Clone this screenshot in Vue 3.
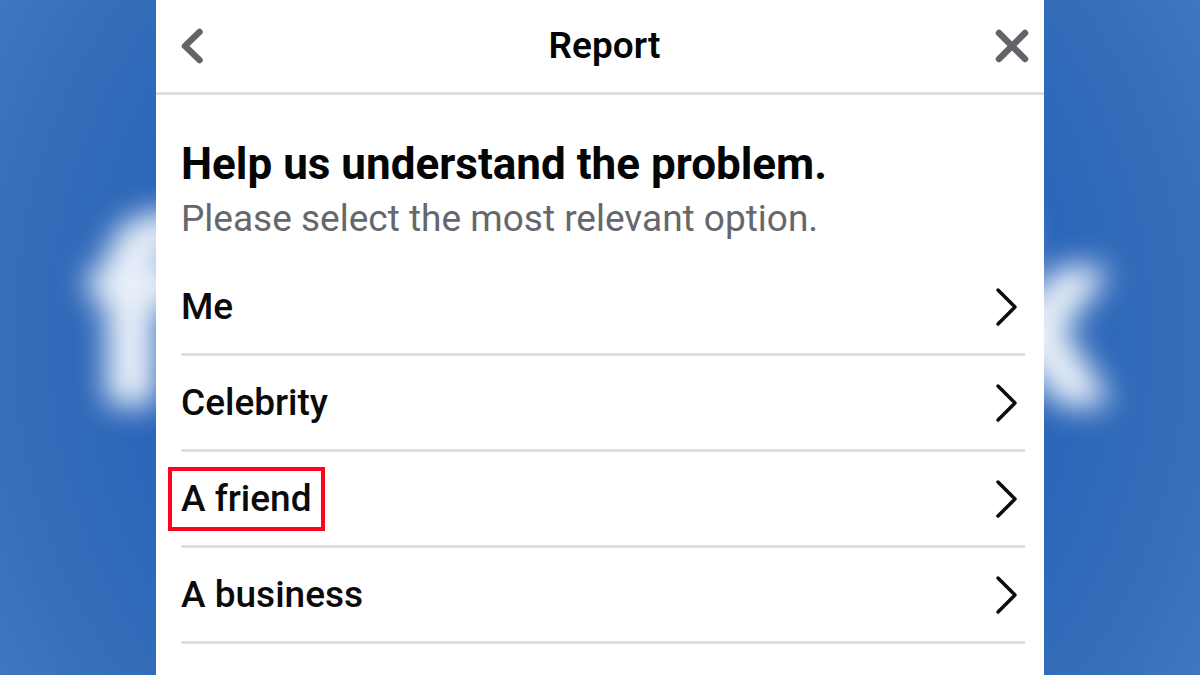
<script setup>
import { ref } from "vue";

const options = ["Me", "Celebrity", "A friend", "A business"];
const selected = ref("A friend");
</script>

<template>
  <div class="page">
    <svg
      class="backdrop"
      viewBox="0 0 1200 675"
      preserveAspectRatio="xMidYMid slice"
      aria-hidden="true"
    >
      <g class="wordmark">
        <text x="92" y="398">f</text>
        <text x="968" y="398">k</text>
      </g>
    </svg>

    <main class="dialog">
      <header class="dialog-header">
        <button class="icon-button" type="button" aria-label="Back">
          <svg width="34" height="38" viewBox="0 0 34 38">
            <path d="M19.5 5 L5 19 L19.5 33" stroke-width="6.5" />
          </svg>
        </button>
        <h1>Report</h1>
        <button class="icon-button" type="button" aria-label="Close">
          <svg width="34" height="34" viewBox="0 0 34 34">
            <path d="M4 4 L30 30 M30 4 L4 30" stroke-width="6.5" />
          </svg>
        </button>
      </header>

      <section class="dialog-body">
        <h2>Help us understand the problem.</h2>
        <p>Please select the most relevant option.</p>

        <ul class="options">
          <li v-for="option in options" :key="option">
            <button class="option" type="button" @click="selected = option">
              <span class="label" :class="{ marked: selected === option }">
                {{ option }}
              </span>
              <svg width="24" height="40" viewBox="0 0 24 40">
                <path d="M3 3 L20 20 L3 37" stroke-width="3.5" />
              </svg>
            </button>
          </li>
        </ul>
      </section>
    </main>
  </div>
</template>

<style>
body {
  margin: 0;
}
</style>

<style scoped>
.page {
  position: relative;
  display: flex;
  justify-content: center;
  min-height: 100vh;
  overflow: hidden;
  background: radial-gradient(
    ellipse 62% 110% at center,
    #2860b6 0%,
    #2b65b9 60%,
    #366eba 80%,
    #487ac5 100%
  );
  font-family: Roboto, "Liberation Sans", sans-serif;
}

.backdrop {
  position: absolute;
  inset: 0;
  width: 100%;
  height: 100%;
}

.wordmark {
  fill: #ebf1f9;
  stroke: #ebf1f9;
  stroke-width: 16px;
  stroke-linejoin: round;
  font-family: Lato, "Liberation Sans", sans-serif;
  font-size: 240px;
  font-weight: 900;
  filter: blur(15px);
}

.dialog {
  position: relative;
  box-sizing: border-box;
  width: 74%;
  background: #fff;
  color: #050505;
}

.dialog-header {
  display: flex;
  align-items: center;
  justify-content: space-between;
  height: 92px;
  padding: 0 15px 0 24px;
  border-bottom: 3px solid #dddfe3;
}

.icon-button {
  display: flex;
  padding: 0;
  border: 0;
  background: none;
  color: #606367;
  cursor: pointer;
}

svg path {
  fill: none;
  stroke: currentColor;
  stroke-linecap: round;
  stroke-linejoin: round;
}

h1 {
  margin: 0;
  font-size: 37px;
  font-weight: 600;
  line-height: 44px;
}

.dialog-body {
  padding: 42px 19px 30px 25px;
}

h2 {
  margin: 0;
  font-size: 44px;
  font-weight: 700;
  line-height: 54px;
}

p {
  margin: 0;
  color: #65676b;
  font-size: 37px;
  line-height: 56px;
}

.options {
  margin: 13px 0 0;
  padding: 0;
  list-style: none;
}

.options li {
  border-bottom: 3px solid #dfe0e4;
}

.option {
  display: flex;
  align-items: center;
  justify-content: space-between;
  width: 100%;
  height: 93px;
  padding: 0 6px 0 0;
  border: 0;
  background: none;
  color: #0b0b0b;
  font-family: inherit;
  font-size: 37px;
  font-weight: 500;
  cursor: pointer;
}

.label {
  margin-left: -13px;
  padding: 5px 9px;
  border: 4px solid transparent;
  line-height: 46px;
}

.marked {
  border-color: #fb041c;
}
</style>
